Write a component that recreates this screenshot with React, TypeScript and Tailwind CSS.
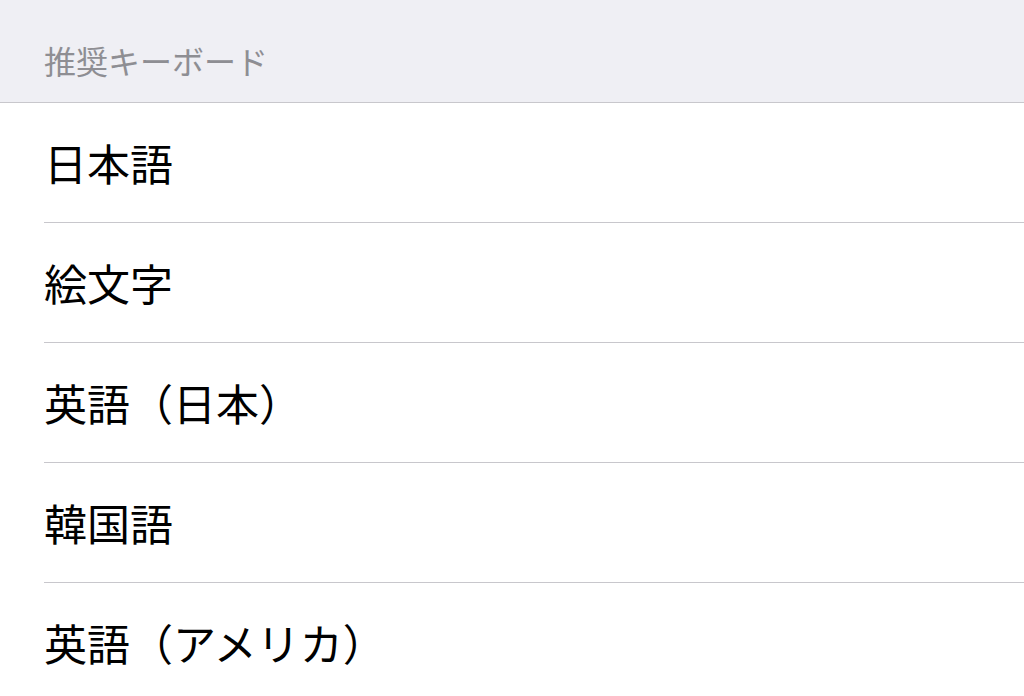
const keyboards = ["日本語", "絵文字", "英語（日本）", "韓国語", "英語（アメリカ）"];

export default function App() {
  return (
    <div
      className="h-[696px] w-[1024px] overflow-hidden bg-white"
      style={{ fontFamily: '"Noto Sans CJK JP", "Noto Sans", sans-serif' }}
    >
      <div className="flex h-[103px] items-end border-b border-[#c8c7cc] bg-[#efeff4] pb-[22px] pl-[44px]">
        <span className="text-[32px] leading-[40px] text-[#8e8e93]">推奨キーボード</span>
      </div>
      <ul className="pl-[44px]">
        {keyboards.map((name) => (
          <li key={name} className="flex h-[120px] items-center border-b border-[#c8c7cc]">
            <span className="text-[43px] leading-none text-black">{name}</span>
          </li>
        ))}
      </ul>
    </div>
  );
}
